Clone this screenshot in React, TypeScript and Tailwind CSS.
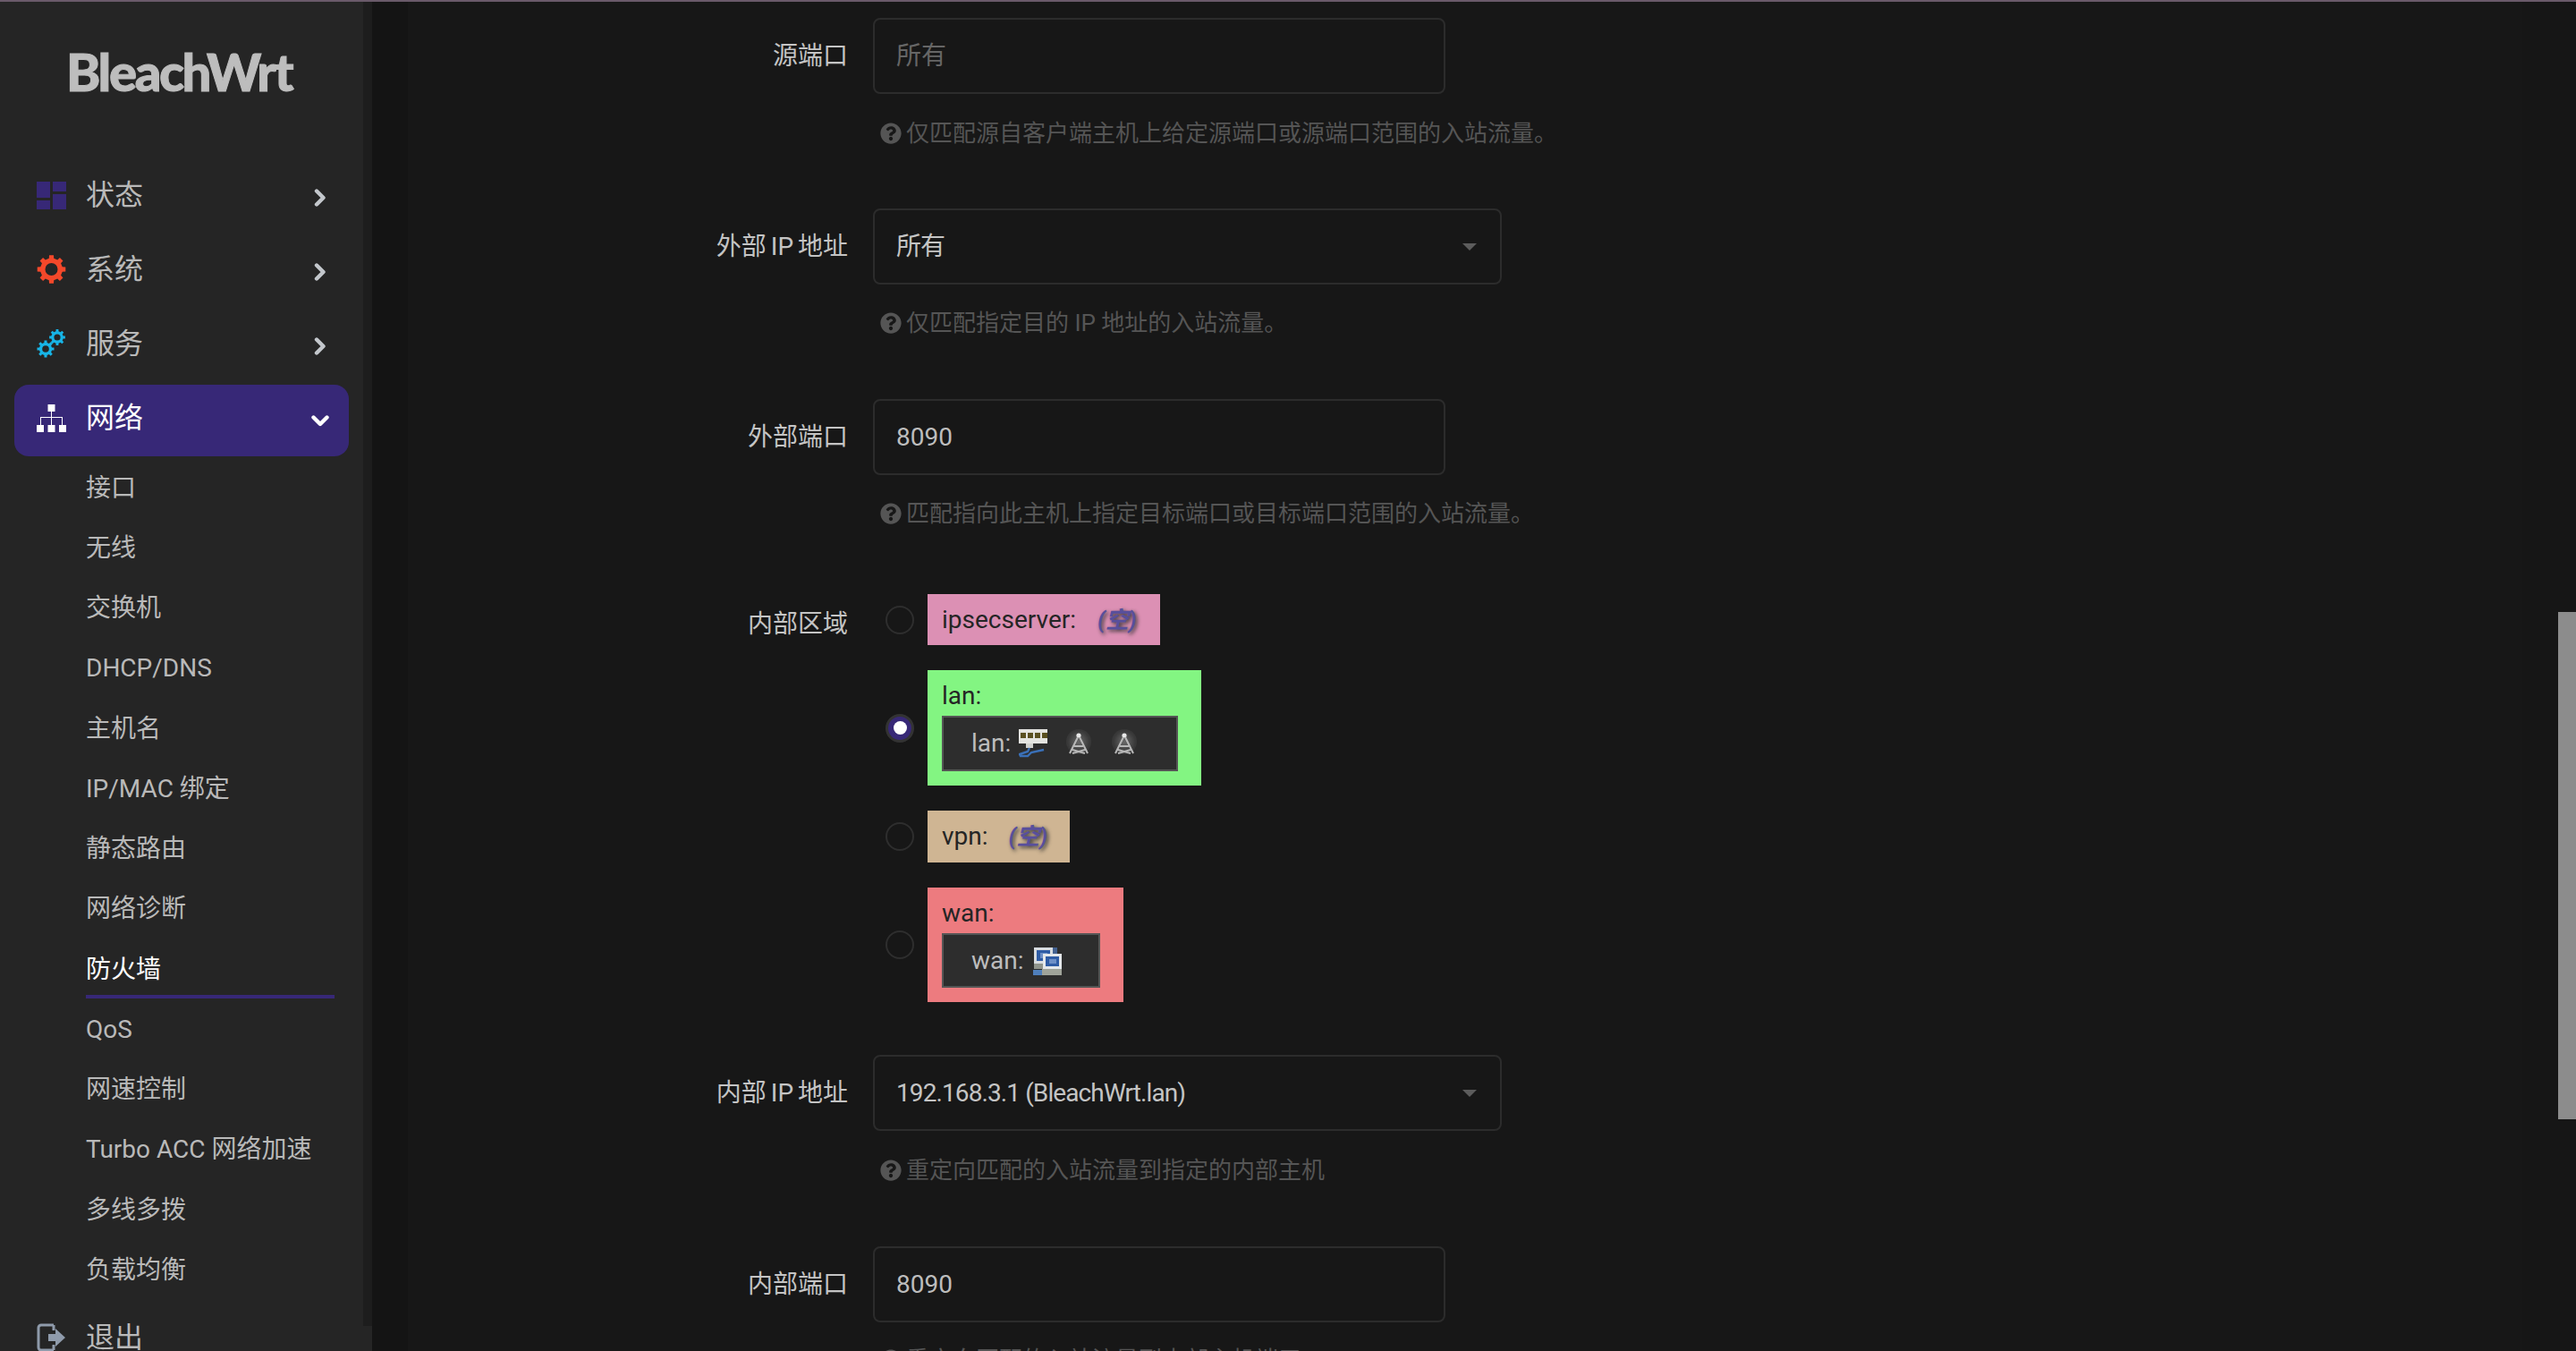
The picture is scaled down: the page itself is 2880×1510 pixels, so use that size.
import React from "react";
import { FaQuestionCircle } from "react-icons/fa";

const FONT = "font-['Roboto','Noto_Sans_CJK_SC',sans-serif]";

function gearPath(cx: number, cy: number, outer: number, root: number, hole: number, teeth: number) {
  const pts: string[] = [];
  const step = (Math.PI * 2) / teeth;
  for (let i = 0; i < teeth; i++) {
    const a = i * step - Math.PI / 2;
    const w = step * 0.2;
    const w2 = step * 0.28;
    const p = (r: number, t: number) => `${(cx + r * Math.cos(t)).toFixed(2)} ${(cy + r * Math.sin(t)).toFixed(2)}`;
    pts.push(p(root, a - w2), p(outer, a - w), p(outer, a + w), p(root, a + w2));
  }
  const ring = `M${pts.join("L")}Z`;
  const c = `M${cx - hole} ${cy}a${hole} ${hole} 0 1 0 ${hole * 2} 0a${hole} ${hole} 0 1 0 ${-hole * 2} 0Z`;
  return ring + c;
}

const DashIcon = () => (
  <svg viewBox="0 0 33 31" className="w-[33px] h-[31px]" fill="#372877">
    <rect x="0" y="0" width="15" height="18" />
    <rect x="18" y="0" width="15" height="11" />
    <rect x="0" y="21" width="15" height="10" />
    <rect x="18" y="14" width="15" height="17" />
  </svg>
);

const GearIcon = () => (
  <svg viewBox="0 0 33 32" className="w-[33px] h-[32px]">
    <path fillRule="evenodd" fill="#f4482a" d={gearPath(16.5, 16, 16, 12.5, 7, 8)} />
  </svg>
);

const GearsIcon = () => (
  <svg viewBox="0 0 33 32" className="w-[33px] h-[32px]">
    <path fillRule="evenodd" fill="#17b4e6" d={gearPath(10, 22, 9.6, 7.2, 3.8, 8)} />
    <path fillRule="evenodd" fill="#17b4e6" d={gearPath(23, 9, 9, 6.8, 3.6, 8)} />
  </svg>
);

const SitemapIcon = () => (
  <svg viewBox="0 0 33 31" className="w-[33px] h-[31px]" fill="#fff">
    <rect x="12.5" y="0" width="8" height="8" />
    <rect x="0" y="23" width="8" height="8" />
    <rect x="12.5" y="23" width="8" height="8" />
    <rect x="25" y="23" width="8" height="8" />
    <rect x="16" y="8" width="1" height="15" />
    <rect x="4" y="14" width="25" height="1" />
    <rect x="4" y="14" width="1" height="9" />
    <rect x="28" y="14" width="1" height="9" />
  </svg>
);

const LogoutIcon = () => (
  <svg viewBox="0 0 33 32" className="w-[33px] h-[32px]" fill="none">
    <path d="M19 2H5a3 3 0 0 0-3 3v22a3 3 0 0 0 3 3h14" stroke="#8f9bab" strokeWidth="3" />
    <path d="M19 2v6M19 24v6" stroke="#8f9bab" strokeWidth="3" />
    <path d="M13 12h8V6l11 10-11 10v-6h-8z" fill="#8f9bab" />
  </svg>
);

const ChevronRight = () => (
  <svg viewBox="0 0 20 20" className="w-[20px] h-[20px]" fill="none">
    <path d="M6 2.5 L13.5 10 L6 17.5" stroke="#c3c7cc" strokeWidth="4.4" strokeLinejoin="round" strokeLinecap="round" />
  </svg>
);

const ChevronDown = () => (
  <svg viewBox="0 0 20 20" className="w-[20px] h-[20px]" fill="none">
    <path d="M2.5 6.5 L10 14 L17.5 6.5" stroke="#fff" strokeWidth="4.4" strokeLinejoin="round" strokeLinecap="round" />
  </svg>
);

const SwitchIcon = () => (
  <svg viewBox="0 0 32 32" className="w-[32px] h-[32px] blur-[0.5px]">
    <rect x="0" y="0" width="32" height="16" fill="#e4e4e0" />
    <rect x="2" y="4" width="6" height="6" fill="#5a5020" />
    <rect x="10" y="4" width="6" height="6" fill="#5a5020" />
    <rect x="18" y="4" width="6" height="6" fill="#5a5020" />
    <rect x="26" y="4" width="6" height="6" fill="#5a5020" />
    <rect x="8" y="16" width="8" height="5" fill="#d0d0cc" />
    <path d="M12 21 L10 25 L1 28 L2 30 L10 30 L14 26 L28 23" fill="none" stroke="#3a70b8" strokeWidth="2.4" />
  </svg>
);

const AntennaIcon = () => (
  <div className="relative w-[32px] h-[32px] shrink-0">
    <div className="absolute left-[2px] top-[0px] w-[28px] h-[28px] rounded-full bg-[radial-gradient(circle,#6a6a6a_0%,#3a3a3a_60%,transparent_100%)]" />
    <svg viewBox="0 0 32 32" className="absolute inset-0 w-[32px] h-[32px] blur-[0.4px]">
      <circle cx="16" cy="7" r="2.6" fill="#e8e8e8" />
      <path d="M15 9 L6 27 M17 9 L26 27 M11 19 L21 19 M9 23 L23 27 M23 23 L9 27" stroke="#b8b8b8" strokeWidth="2" fill="none" />
    </svg>
  </div>
);

const ComputersIcon = () => (
  <svg viewBox="0 0 32 32" className="w-[32px] h-[32px] blur-[0.4px]">
    <rect x="20" y="1" width="7" height="8" fill="#44618f" />
    <rect x="1" y="1" width="21" height="18" fill="#d8dce0" />
    <rect x="4" y="4" width="15" height="12" fill="#2f5ca5" />
    <rect x="8" y="7" width="8" height="6" fill="#6d8fc7" />
    <rect x="1" y="19" width="12" height="6" fill="#8f948c" />
    <rect x="0" y="26" width="10" height="6" fill="#4f7fbb" />
    <rect x="11" y="8" width="21" height="17" fill="#e4e7ea" />
    <rect x="14" y="11" width="15" height="11" fill="#2f5ca5" />
    <rect x="18" y="14" width="8" height="5" fill="#6d8fc7" />
    <rect x="10" y="25" width="22" height="7" fill="#a0a49a" />
  </svg>
);

const menuTop = [
  { name: "状态", icon: <DashIcon /> },
  { name: "系统", icon: <GearIcon /> },
  { name: "服务", icon: <GearsIcon /> },
];

const sub = [
  "接口",
  "无线",
  "交换机",
  "DHCP/DNS",
  "主机名",
  "IP/MAC 绑定",
  "静态路由",
  "网络诊断",
  "防火墙",
  "QoS",
  "网速控制",
  "Turbo ACC 网络加速",
  "多线多拨",
  "负载均衡",
];

function Sidebar() {
  return (
    <aside className="w-[416px] h-full shrink-0 flex">
      <div className="w-[406px] h-full bg-[#252525] text-[#b9b9b9] overflow-hidden">
        <div className="h-[179px] pt-[48px] pl-[74px]">
          <span className="block h-[60px] text-[58px] leading-[60px] font-black tracking-[-2.4px] text-[#bdbdbd] [-webkit-text-stroke:1px_#bdbdbd] font-['Lato','Liberation_Sans',sans-serif]">
            BleachWrt
          </span>
        </div>
        <nav className="flex flex-col gap-[3px] pl-[16px] pr-[16px]">
          {menuTop.map((m) => (
            <div key={m.name} className="h-[80px] flex items-center pl-[25px] pr-[22px]">
              <div className="w-[33px] -mt-[6px] flex justify-center">{m.icon}</div>
              <span className="ml-[22px] flex-1 text-[32px] leading-[38px] -mt-[6px]">{m.name}</span>
              <ChevronRight />
            </div>
          ))}
          <div className="h-[80px] flex items-center pl-[25px] pr-[22px] rounded-[16px] bg-[#372877] text-white">
            <div className="w-[33px] -mt-[6px] flex justify-center">
              <SitemapIcon />
            </div>
            <span className="ml-[22px] flex-1 text-[32px] leading-[38px] -mt-[6px]">网络</span>
            <ChevronDown />
          </div>
        </nav>
        <ul className="mt-[2px] pl-[96px]">
          {sub.map((s) => (
            <li
              key={s}
              className={`relative h-[67.25px] w-[278px] flex items-center text-[28px] leading-[34px] whitespace-nowrap ${
                s === "防火墙" ? "text-white" : ""
              }`}
            >
              {s}
              {s === "防火墙" && (
                <span className="absolute left-0 right-0 bottom-[1px] h-[4px] bg-[#372877]" />
              )}
            </li>
          ))}
        </ul>
        <div className="mt-[4px] mx-[16px] h-[80px] flex items-center pl-[25px] pr-[22px]">
          <div className="w-[33px] -mt-[6px] flex justify-center">
            <LogoutIcon />
          </div>
          <span className="ml-[22px] flex-1 text-[32px] leading-[38px] -mt-[6px]">退出</span>
        </div>
      </div>
      <div className="w-[10px] h-full flex flex-col">
        <div className="h-[1480px] bg-[#1d1d1d]" />
        <div className="flex-1 bg-[#252525]" />
      </div>
    </aside>
  );
}

function Help({ children, className = "" }: { children: React.ReactNode; className?: string }) {
  return (
    <div className={`ml-[8px] flex items-center h-[40px] text-[26px] leading-[40px] text-[#555] whitespace-nowrap ${className}`}>
      <FaQuestionCircle className="w-[24px] h-[24px] mr-[5px] shrink-0" />
      <span>{children}</span>
    </div>
  );
}

function Label({ children }: { children: React.ReactNode }) {
  return (
    <label className="w-[492px] shrink-0 mr-[28px] h-[85px] flex items-center justify-end text-[28px] text-[#c4c4c4] whitespace-nowrap [word-spacing:-2px]">
      {children}
    </label>
  );
}

function Field({ children, muted = false }: { children: React.ReactNode; muted?: boolean }) {
  return (
    <div
      className={`w-[640px] h-[85px] rounded-[8px] border-2 border-[#2c2c2c] flex items-center pl-[24px] text-[28px] ${
        muted ? "text-[#666]" : "text-[#bdbdbd]"
      }`}
    >
      {children}
    </div>
  );
}

function Select({ children }: { children: React.ReactNode }) {
  return (
    <div className="w-[703px] h-[85px] rounded-[8px] border-2 border-[#2c2c2c] flex items-center justify-between pl-[24px] pr-[26px] text-[28px] text-[#c4c4c4]">
      <span className="tracking-[-0.9px]">{children}</span>
      <span className="w-0 h-0 border-x-[8px] border-x-transparent border-t-[8px] border-t-[#5c5c5c]" />
    </div>
  );
}

function Radio({ on = false }: { on?: boolean }) {
  return on ? (
    <span className="w-[32px] h-[32px] shrink-0 rounded-full bg-[#372877] border-[3px] border-[#333] flex items-center justify-center">
      <span className="w-[15px] h-[15px] rounded-full bg-white" />
    </span>
  ) : (
    <span className="w-[32px] h-[32px] shrink-0 rounded-full border-[2px] border-[#2e2e2e]" />
  );
}

const Empty = () => (
  <em className="font-bold text-[#584f9c] [text-shadow:2px_2px_4px_#333] text-[26px]">(空)</em>
);

function Zones() {
  return (
    <div className="flex flex-col gap-[28px] pl-[14px] text-[28px] leading-[34px] text-[#252525]">
      <div className="flex items-center gap-[15px]">
        <Radio />
        <div className="w-[260px] h-[57px] bg-[#dc90b4] pl-[16px] flex items-center">
          <span>ipsecserver:</span>
          <span className="ml-[24px]"><Empty /></span>
        </div>
      </div>
      <div className="flex items-center gap-[15px]">
        <Radio on />
        <div className="w-[306px] h-[129px] bg-[#83f582] px-[16px] pt-[12px]">
          <div className="h-[39px] leading-[34px]">lan:</div>
          <div className="w-[264px] h-[62px] border-[2px] border-[#555] bg-[#2d2d2d] text-[#bdbdbd] flex items-center pl-[31px]">
            <span>lan:</span>
            <span className="ml-[9px] flex gap-[19px]">
              <SwitchIcon />
              <AntennaIcon />
              <AntennaIcon />
            </span>
          </div>
        </div>
      </div>
      <div className="flex items-center gap-[15px]">
        <Radio />
        <div className="w-[159px] h-[58px] bg-[#cfb593] pl-[16px] flex items-center">
          <span>vpn:</span>
          <span className="ml-[23px]"><Empty /></span>
        </div>
      </div>
      <div className="flex items-center gap-[15px]">
        <Radio />
        <div className="w-[219px] h-[128px] bg-[#ed7b7f] px-[16px] pt-[12px]">
          <div className="h-[39px] leading-[34px]">wan:</div>
          <div className="w-[177px] h-[61px] border-[2px] border-[#555] bg-[#2d2d2d] text-[#bdbdbd] flex items-center pl-[31px]">
            <span>wan:</span>
            <span className="ml-[10px]">
              <ComputersIcon />
            </span>
          </div>
        </div>
      </div>
    </div>
  );
}

function Main() {
  return (
    <main className="relative flex-1 h-full flex bg-[#171717] overflow-hidden">
      <div className="w-[40px] h-full bg-[#141414] shrink-0" />
      <div className="flex-1 pt-[18px]">
        <div className="flex">
          <Label>源端口</Label>
          <div>
            <Field muted>所有</Field>
            <Help className="mt-[24px]">仅匹配源自客户端主机上给定源端口或源端口范围的入站流量。</Help>
          </div>
        </div>
        <div className="flex mt-[64px]">
          <Label>外部 IP 地址</Label>
          <div>
            <Select>所有</Select>
            <Help className="mt-[23px]">仅匹配指定目的 IP 地址的入站流量。</Help>
          </div>
        </div>
        <div className="flex mt-[65px]">
          <Label>外部端口</Label>
          <div>
            <Field>8090</Field>
            <Help className="mt-[23px]">匹配指向此主机上指定目标端口或目标端口范围的入站流量。</Help>
          </div>
        </div>
        <div className="flex mt-[70px]">
          <label className="w-[492px] shrink-0 mr-[28px] h-[68px] flex items-center justify-end text-[28px] text-[#c4c4c4]">
            内部区域
          </label>
          <Zones />
        </div>
        <div className="flex mt-[59px]">
          <Label>内部 IP 地址</Label>
          <div>
            <Select>192.168.3.1 (BleachWrt.lan)</Select>
            <Help className="mt-[24px]">重定向匹配的入站流量到指定的内部主机</Help>
          </div>
        </div>
        <div className="flex mt-[65px]">
          <Label>内部端口</Label>
          <div>
            <Field>8090</Field>
            <Help className="mt-[22px]">重定向匹配的入站流量到内部主机端口</Help>
          </div>
        </div>
      </div>
      <div className="w-[60px] h-full bg-[#161616] shrink-0" />
      <div className="absolute right-0 top-[682px] w-[20px] h-[567px] bg-[#8c8c8c]" />
    </main>
  );
}

export default function App() {
  return (
    <div className={`w-[2880px] h-[1510px] flex flex-col overflow-hidden bg-[#171717] ${FONT}`}>
      <div className="h-[2px] bg-[#6a5a6a] shrink-0" />
      <div className="flex-1 min-h-0 flex">
        <Sidebar />
        <Main />
      </div>
    </div>
  );
}
